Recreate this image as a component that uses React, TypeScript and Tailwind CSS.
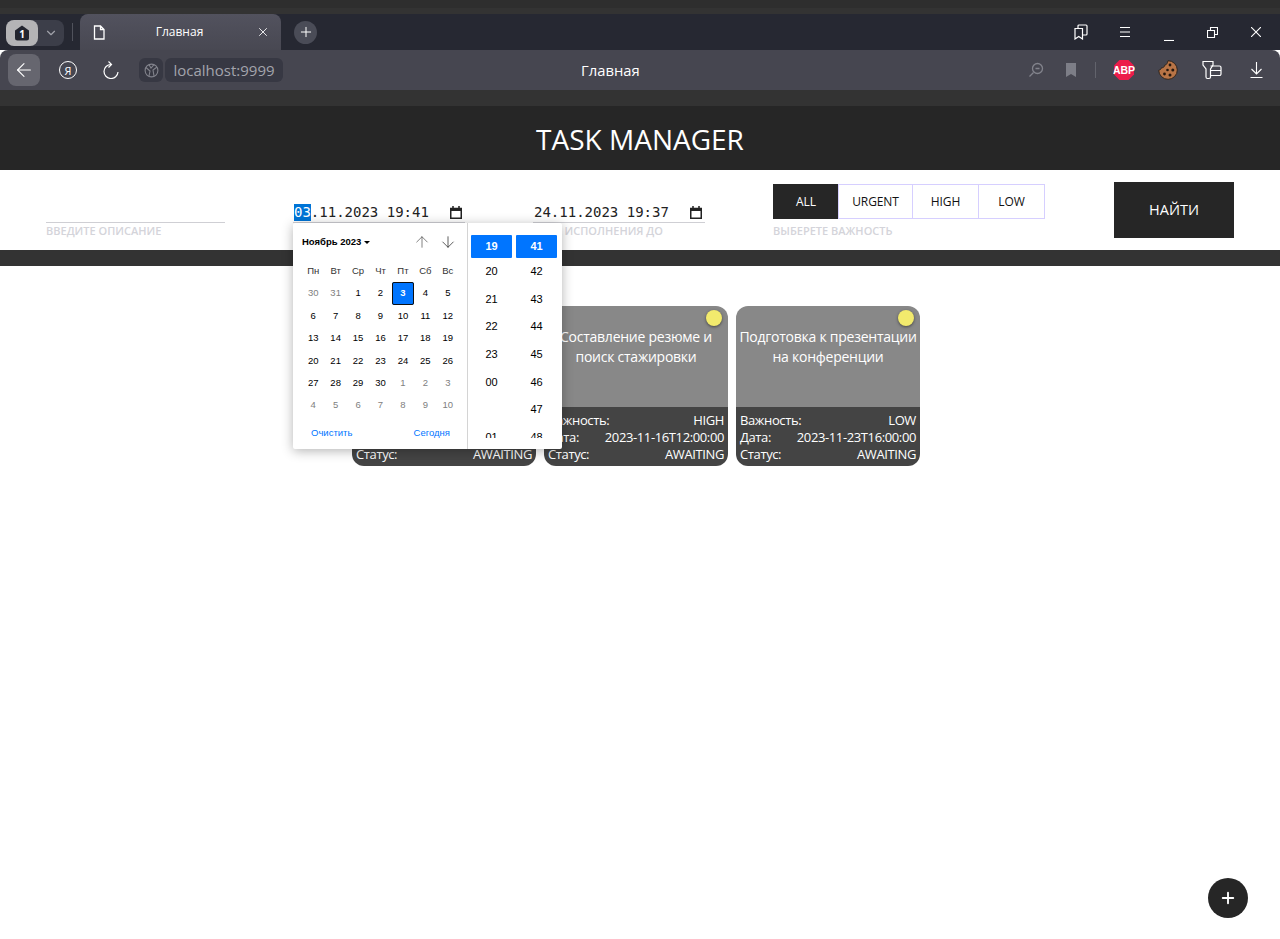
import React from 'react';
import { ArrowDown, ArrowLeft, ArrowUp, ChevronDown, Plus, X } from 'lucide-react';

const WEEK = ['Пн', 'Вт', 'Ср', 'Чт', 'Пт', 'Сб', 'Вс'];

const DAYS: { d: number; muted?: boolean; active?: boolean }[] = [
  { d: 30, muted: true }, { d: 31, muted: true },
  { d: 1 }, { d: 2 }, { d: 3, active: true }, { d: 4 }, { d: 5 },
  ...[6, 7, 8, 9, 10, 11, 12, 13, 14, 15, 16, 17, 18, 19, 20, 21, 22, 23, 24, 25, 26, 27, 28, 29, 30].map((d) => ({ d })),
  ...[1, 2, 3, 4, 5, 6, 7, 8, 9, 10].map((d) => ({ d, muted: true })),
];

const HOURS = ['20', '21', '22', '23', '00', '', '01'];
const MINUTES = ['42', '43', '44', '45', '46', '47', '48'];

// the first card sits under the open date popup, only its status row shows
const TASKS = [
  { id: 1, title: '', importance: '', date: '' },
  { id: 2, title: 'Составление резюме и поиск стажировки', importance: 'HIGH', date: '2023-11-16T12:00:00' },
  { id: 3, title: 'Подготовка к презентации на конференции', importance: 'LOW', date: '2023-11-23T16:00:00' },
];

const LEVELS = [
  { name: 'ALL', w: 'w-[66px]', on: true },
  { name: 'URGENT', w: 'w-[75px]' },
  { name: 'HIGH', w: 'w-[67px]' },
  { name: 'LOW', w: 'w-[67px]' },
];

const TabStrip: React.FC = () => (
  <div className="h-[36px] bg-[#262832] flex items-center relative">
    <div className="ml-[6px] mt-[1px] flex h-[26px] w-[58px] rounded-lg bg-[#3c3e49]">
      <div className="w-[32px] rounded-lg bg-[#b4b4b6] flex items-center justify-center">
        <svg width="18" height="18" viewBox="0 0 18 18">
          <path d="M2 6.500 9 1.500l7 5V14a2.500 2.500 0 0 1-2.500 2.500h-9A2.500 2.500 0 0 1 2 14Z" fill="#23252f" />
          <text x="9" y="13.500" textAnchor="middle" fontSize="10" fontWeight="700" fill="#fff" fontFamily="Open Sans, sans-serif">1</text>
        </svg>
      </div>
      <div className="flex-1 flex items-center justify-center">
        <ChevronDown size={14} className="text-[#a0a2aa]" />
      </div>
    </div>
    <div className="ml-[8px] w-px h-[18px] bg-[#50525c]" />
    <div className="ml-[7px] self-end h-[36px] w-[201px] rounded-t-lg bg-gradient-to-b from-[#52525e] to-[#484852] flex items-center pl-[13px] pr-[11px] text-white">
      <svg width="12" height="15" viewBox="0 0 12 15" fill="none" stroke="#fff" strokeWidth="1.300">
        <path d="M1.500 1h6l3.500 3.500V14h-9.500ZM7.500 1v3.500H11" />
      </svg>
      <span className="flex-1 text-center text-[12px] pr-[2px]">Главная</span>
      <X size={14} strokeWidth={1.5} />
    </div>
    <div className="ml-[13px] w-[23px] h-[23px] rounded-full bg-[#4a4c57] flex items-center justify-center text-white">
      <Plus size={16} strokeWidth={1.5} />
    </div>
    <div className="ml-auto mr-[19px] flex items-center text-white">
      <svg width="14" height="16" viewBox="0 0 14 16" fill="none" stroke="#fff" strokeWidth="1.200">
        <path d="M1 4.500h7.500V15L4.750 12.500 1 15Z" />
        <path d="M4 4.500V2a1 1 0 0 1 1-1h7a1 1 0 0 1 1 1v8a1 1 0 0 1-1 1H8.500" />
      </svg>
      <svg width="10" height="10" viewBox="0 0 10 10" stroke="#fff" strokeWidth="1.100" className="ml-[32px]">
        <path d="M0 .5h10M0 5h10M0 9.500h10" />
      </svg>
      <svg width="10" height="10" viewBox="0 0 10 10" stroke="#fff" strokeWidth="1.100" className="ml-[34px] translate-y-[4px]">
        <path d="M0 9.500h10" />
      </svg>
      <svg width="11" height="11" viewBox="0 0 11 11" fill="none" stroke="#fff" strokeWidth="1.100" className="ml-[33px]">
        <path d="M.5 3.500h7v7h-7Z" />
        <path d="M3.500 3.500v-3h7v7h-3" />
      </svg>
      <svg width="10" height="10" viewBox="0 0 10 10" stroke="#fff" strokeWidth="1.100" className="ml-[33px]">
        <path d="M0 0l10 10M10 0 0 10" />
      </svg>
    </div>
  </div>
);

const ToolBar: React.FC = () => (
  <div className="h-[40px] bg-[#464650] rounded-t-lg flex items-center text-white">
    <div className="ml-[8px] w-[32px] h-[32px] rounded-lg bg-[#66666f] flex items-center justify-center">
      <ArrowLeft size={22} strokeWidth={1.2} />
    </div>
    <div className="ml-[19px] w-[18px] h-[18px] rounded-full border border-white flex items-center justify-center text-[11px] leading-none">Я</div>
    <svg width="16" height="18" viewBox="0 0 16 18" fill="none" stroke="#fff" strokeWidth="1.200" className="ml-[26px]">
      <path d="M8 3.500a7 7 0 1 0 7 7.500" />
      <path d="M5.500.5 8.500 3.500 5.500 6.500" />
    </svg>
    <div className="ml-[20px] w-[24px] h-[24px] rounded-md bg-[#373843] flex items-center justify-center">
      <svg width="15" height="15" viewBox="0 0 15 15" fill="none" stroke="#82838c" strokeWidth="1.100">
        <circle cx="7.500" cy="7.500" r="6.400" />
        <path d="M2 4.500 6 8l-1 5M13 4 9 7l1 6M5 1.700 7 5l3-3.300" />
      </svg>
    </div>
    <div className="ml-[2px] w-[118px] h-[24px] rounded-md bg-[#373843] text-[#a3a4ac] text-[15px] leading-[24px] text-center">localhost:9999</div>
    <span className="ml-[298px] text-[14.800px]">Главная</span>
    <div className="ml-auto flex items-center">
      <svg width="16" height="16" viewBox="0 0 16 16" fill="none" stroke="#82838c" strokeWidth="1.300" className="mr-[21px]">
        <circle cx="9.500" cy="6.500" r="5" />
        <path d="M7.500 6.500h4M5.500 10.500 1.500 14.500" />
      </svg>
      <svg width="12" height="14" viewBox="0 0 12 14" className="mr-[18px]">
        <path d="M1 0h10v14l-5-3-5 3Z" fill="#7d7e87" />
      </svg>
      <div className="w-px h-[16px] bg-[#62636c] mr-[17px]" />
      <svg width="22" height="22" viewBox="0 0 22 22" className="mr-[23px]">
        <path d="M6.500 1h9L21 6.500v9L15.500 21h-9L1 15.500v-9Z" fill="#ec1c4b" />
        <text x="11" y="14.700" textAnchor="middle" fontSize="10.500" fontWeight="700" fill="#fff" fontFamily="Liberation Sans, sans-serif">ABP</text>
      </svg>
      <svg width="20" height="20" viewBox="0 0 20 20" className="mr-[24px]">
        <path d="M10 .7a9.300 9.300 0 1 1-9.300 9.600c1.600-.4 2.500-1.200 2.800-2.600 1.500.3 3-.7 3-2.300C8.500 5 9.600 3 10 .7Z" fill="#b87446" stroke="#2b2118" strokeWidth=".9" />
        <circle cx="12" cy="5" r="1.400" fill="#24180f" />
        <circle cx="14.800" cy="10" r="1.500" fill="#24180f" />
        <circle cx="9.500" cy="10" r="1.300" fill="#24180f" />
        <circle cx="6.500" cy="14" r="1.400" fill="#24180f" />
        <circle cx="12" cy="15" r="1.500" fill="#24180f" />
      </svg>
      <svg width="20" height="20" viewBox="0 0 20 20" fill="none" stroke="#fff" strokeWidth="1.200" className="mr-[28px]">
        <path d="M1 1.500h10v3.500L8.500 9v8A1.500 1.500 0 0 1 7 18.500H5.500A1.500 1.500 0 0 1 4 17V9L1 5Z" />
        <path d="M8.500 6h9A1.500 1.500 0 0 1 19 7.500v6.500a1.500 1.500 0 0 1-1.500 1.500h-9M8.500 10.500H19" />
      </svg>
      <svg width="13" height="16" viewBox="0 0 13 16" fill="none" stroke="#fff" strokeWidth="1.100" className="mr-[17px]">
        <path d="M6.500 0v12M1.500 7l5 5 5-5M.5 15.500h12" />
      </svg>
    </div>
  </div>
);

const DateField: React.FC<{ value: string; selected?: boolean; label: string }> = ({ value, selected, label }) => (
  <div className="w-[172px] mt-[34px]">
    <div className="h-[19px] border-b border-[#cfcfd4] flex items-start pl-px pr-[3px] font-['DejaVu_Sans_Mono',monospace] text-[14px] leading-[17px] text-[#222]">
      {selected && <span className="bg-[#0074d6] text-white">03</span>}
      <span>{selected ? value.slice(2) : value}</span>
      <svg width="12" height="13" viewBox="0 0 12 13" fill="none" stroke="#222" className="ml-auto mt-[2px]">
        <path d="M.75 2.500h10.500v9.750H.75Z" strokeWidth="1.500" />
        <path d="M1 4h10" strokeWidth="2" />
        <path d="M3 0v2M9 0v2" strokeWidth="1.500" />
      </svg>
    </div>
    <div className="mt-[1px] text-[11px] font-semibold leading-[14px] text-[#d4d4da]">{label}</div>
  </div>
);

const FilterRow: React.FC = () => (
  <div className="h-[80px] bg-white flex items-start gap-[68px] pl-[46px]">
    <div className="w-[179px] mt-[52px]">
      <div className="border-b border-[#cfcfd4]" />
      <div className="mt-[1px] text-[11px] font-semibold leading-[14px] text-[#d4d4da]">ВВЕДИТЕ ОПИСАНИЕ</div>
    </div>
    <DateField value="03.11.2023 19:41" selected label="" />
    <DateField value="24.11.2023 19:37" label="ДАТА ИСПОЛНЕНИЯ ДО" />
    <div className="w-[272px] mt-[14px]">
      <div className="flex h-[35px]">
        {LEVELS.map((l) => (
          <div
            key={l.name}
            className={
              l.on
                ? `${l.w} bg-[#262626] text-white text-[12px] flex items-center justify-center`
                : `${l.w} border border-[#d6cfff] -ml-px text-[#111] text-[12px] tracking-[-0.1px] flex items-center justify-center`
            }
          >
            {l.name}
          </div>
        ))}
      </div>
      <div className="mt-[5px] text-[11px] font-semibold leading-[14px] text-[#d4d4da]">ВЫБЕРЕТЕ ВАЖНОСТЬ</div>
    </div>
    <div className="w-[120px] h-[56px] ml-px mt-[12px] bg-[#262626] text-white text-[14.500px] flex items-center justify-center">НАЙТИ</div>
  </div>
);

const TaskCard: React.FC<{ title: string; importance: string; date: string }> = ({ title, importance, date }) => (
  <div className="w-[184px] h-[160px] rounded-xl overflow-hidden relative flex flex-col text-white text-[13px] tracking-[-0.38px]">
    <div className="h-[101px] bg-[#888888] pt-[21px] text-center text-[14px] tracking-[-0.25px] leading-[20px]">{title}</div>
    <div className="absolute top-[4px] right-[6px] w-[16px] h-[16px] rounded-full bg-[#f2ea6d] shadow-[0_1px_3px_rgba(0,0,0,0.5)]" />
    <div className="flex-1 bg-[#444444] px-[4px] pt-[5px] leading-[17px]">
      <div className="flex justify-between h-[17px]">{date && <><span>Важность:</span><span>{importance}</span></>}</div>
      <div className="flex justify-between h-[17px]">{date && <><span>Дата:</span><span>{date}</span></>}</div>
      <div className="flex justify-between h-[17px]"><span>Статус:</span><span>AWAITING</span></div>
    </div>
  </div>
);

const DatePopup: React.FC = () => (
  <div className="absolute left-[293px] top-[223px] w-[269px] h-[226px] bg-white rounded-[2px] shadow-[0_2px_12px_rgba(0,0,0,0.3)] flex font-['Liberation_Sans',sans-serif] text-black z-10">
    <div className="w-[175px] border-r border-[#d4d4d4] pl-[9px] pt-[10px]">
      <div className="flex items-center h-[18px] pr-[10px]">
        <span className="text-[9.500px] font-bold">Ноябрь 2023</span>
        <span className="ml-[3px] border-x-[3px] border-t-[3px] border-x-transparent border-t-black" />
        <ArrowUp size={18} strokeWidth={0.9} className="ml-auto text-[#444]" />
        <ArrowDown size={18} strokeWidth={0.9} className="ml-[8px] text-[#111]" />
      </div>
      <div className="grid grid-cols-7 w-[157px] mt-[9px] text-[9.500px] text-center leading-[22.400px]">
        {WEEK.map((w) => <div key={w} className="text-[#333]">{w}</div>)}
        {DAYS.map((day, i) => (
          <div
            key={i}
            className={
              day.active
                ? 'bg-[#0075ff] text-white font-bold rounded-[2px] outline outline-1 outline-[#101010] -outline-offset-1'
                : day.muted ? 'text-[#808080]' : 'text-black'
            }
          >
            {day.d}
          </div>
        ))}
      </div>
      <div className="flex justify-between w-[139px] ml-[9px] mt-[9px] text-[9.500px] text-[#0075ff]">
        <span>Очистить</span>
        <span>Сегодня</span>
      </div>
    </div>
    <div className="flex-1 pl-[3px] pt-[12px] h-[215px] overflow-hidden flex gap-[4px] text-[11px] text-center">
      {[{ top: '19', rows: HOURS }, { top: '41', rows: MINUTES }].map((col) => (
        <div key={col.top} className="w-[41px]">
          <div className="h-[23px] bg-[#0075ff] rounded-[1px] text-white font-bold leading-[23px]">{col.top}</div>
          {col.rows.map((r, i) => (
            <div key={i} className="h-[27.700px] leading-[27.700px]">{r}</div>
          ))}
        </div>
      ))}
    </div>
  </div>
);

const App: React.FC = () => (
  <div className="min-h-screen bg-white relative font-['Open_Sans',sans-serif] overflow-hidden">
    <div className="h-[8px] bg-[#2e2e2e]" />
    <div className="h-[6px] bg-[#333333]" />
    <TabStrip />
    <ToolBar />
    <div className="h-[16px] bg-[#333333]" />
    <div className="h-[64px] bg-[#262626] text-white text-[28px] flex items-center justify-center pt-px">TASK MANAGER</div>
    <FilterRow />
    <div className="h-[16px] bg-[#333333]" />
    <div className="pt-[40px] pr-[8px] flex justify-center gap-[8px]">
      {TASKS.map((t) => <TaskCard key={t.id} title={t.title} importance={t.importance} date={t.date} />)}
    </div>
    <DatePopup />
    <div className="absolute left-[1208px] top-[878px] w-[40px] h-[40px] rounded-full bg-[#262626] flex items-center justify-center text-white">
      <Plus size={18} strokeWidth={2.500} />
    </div>
  </div>
);

export default App;
